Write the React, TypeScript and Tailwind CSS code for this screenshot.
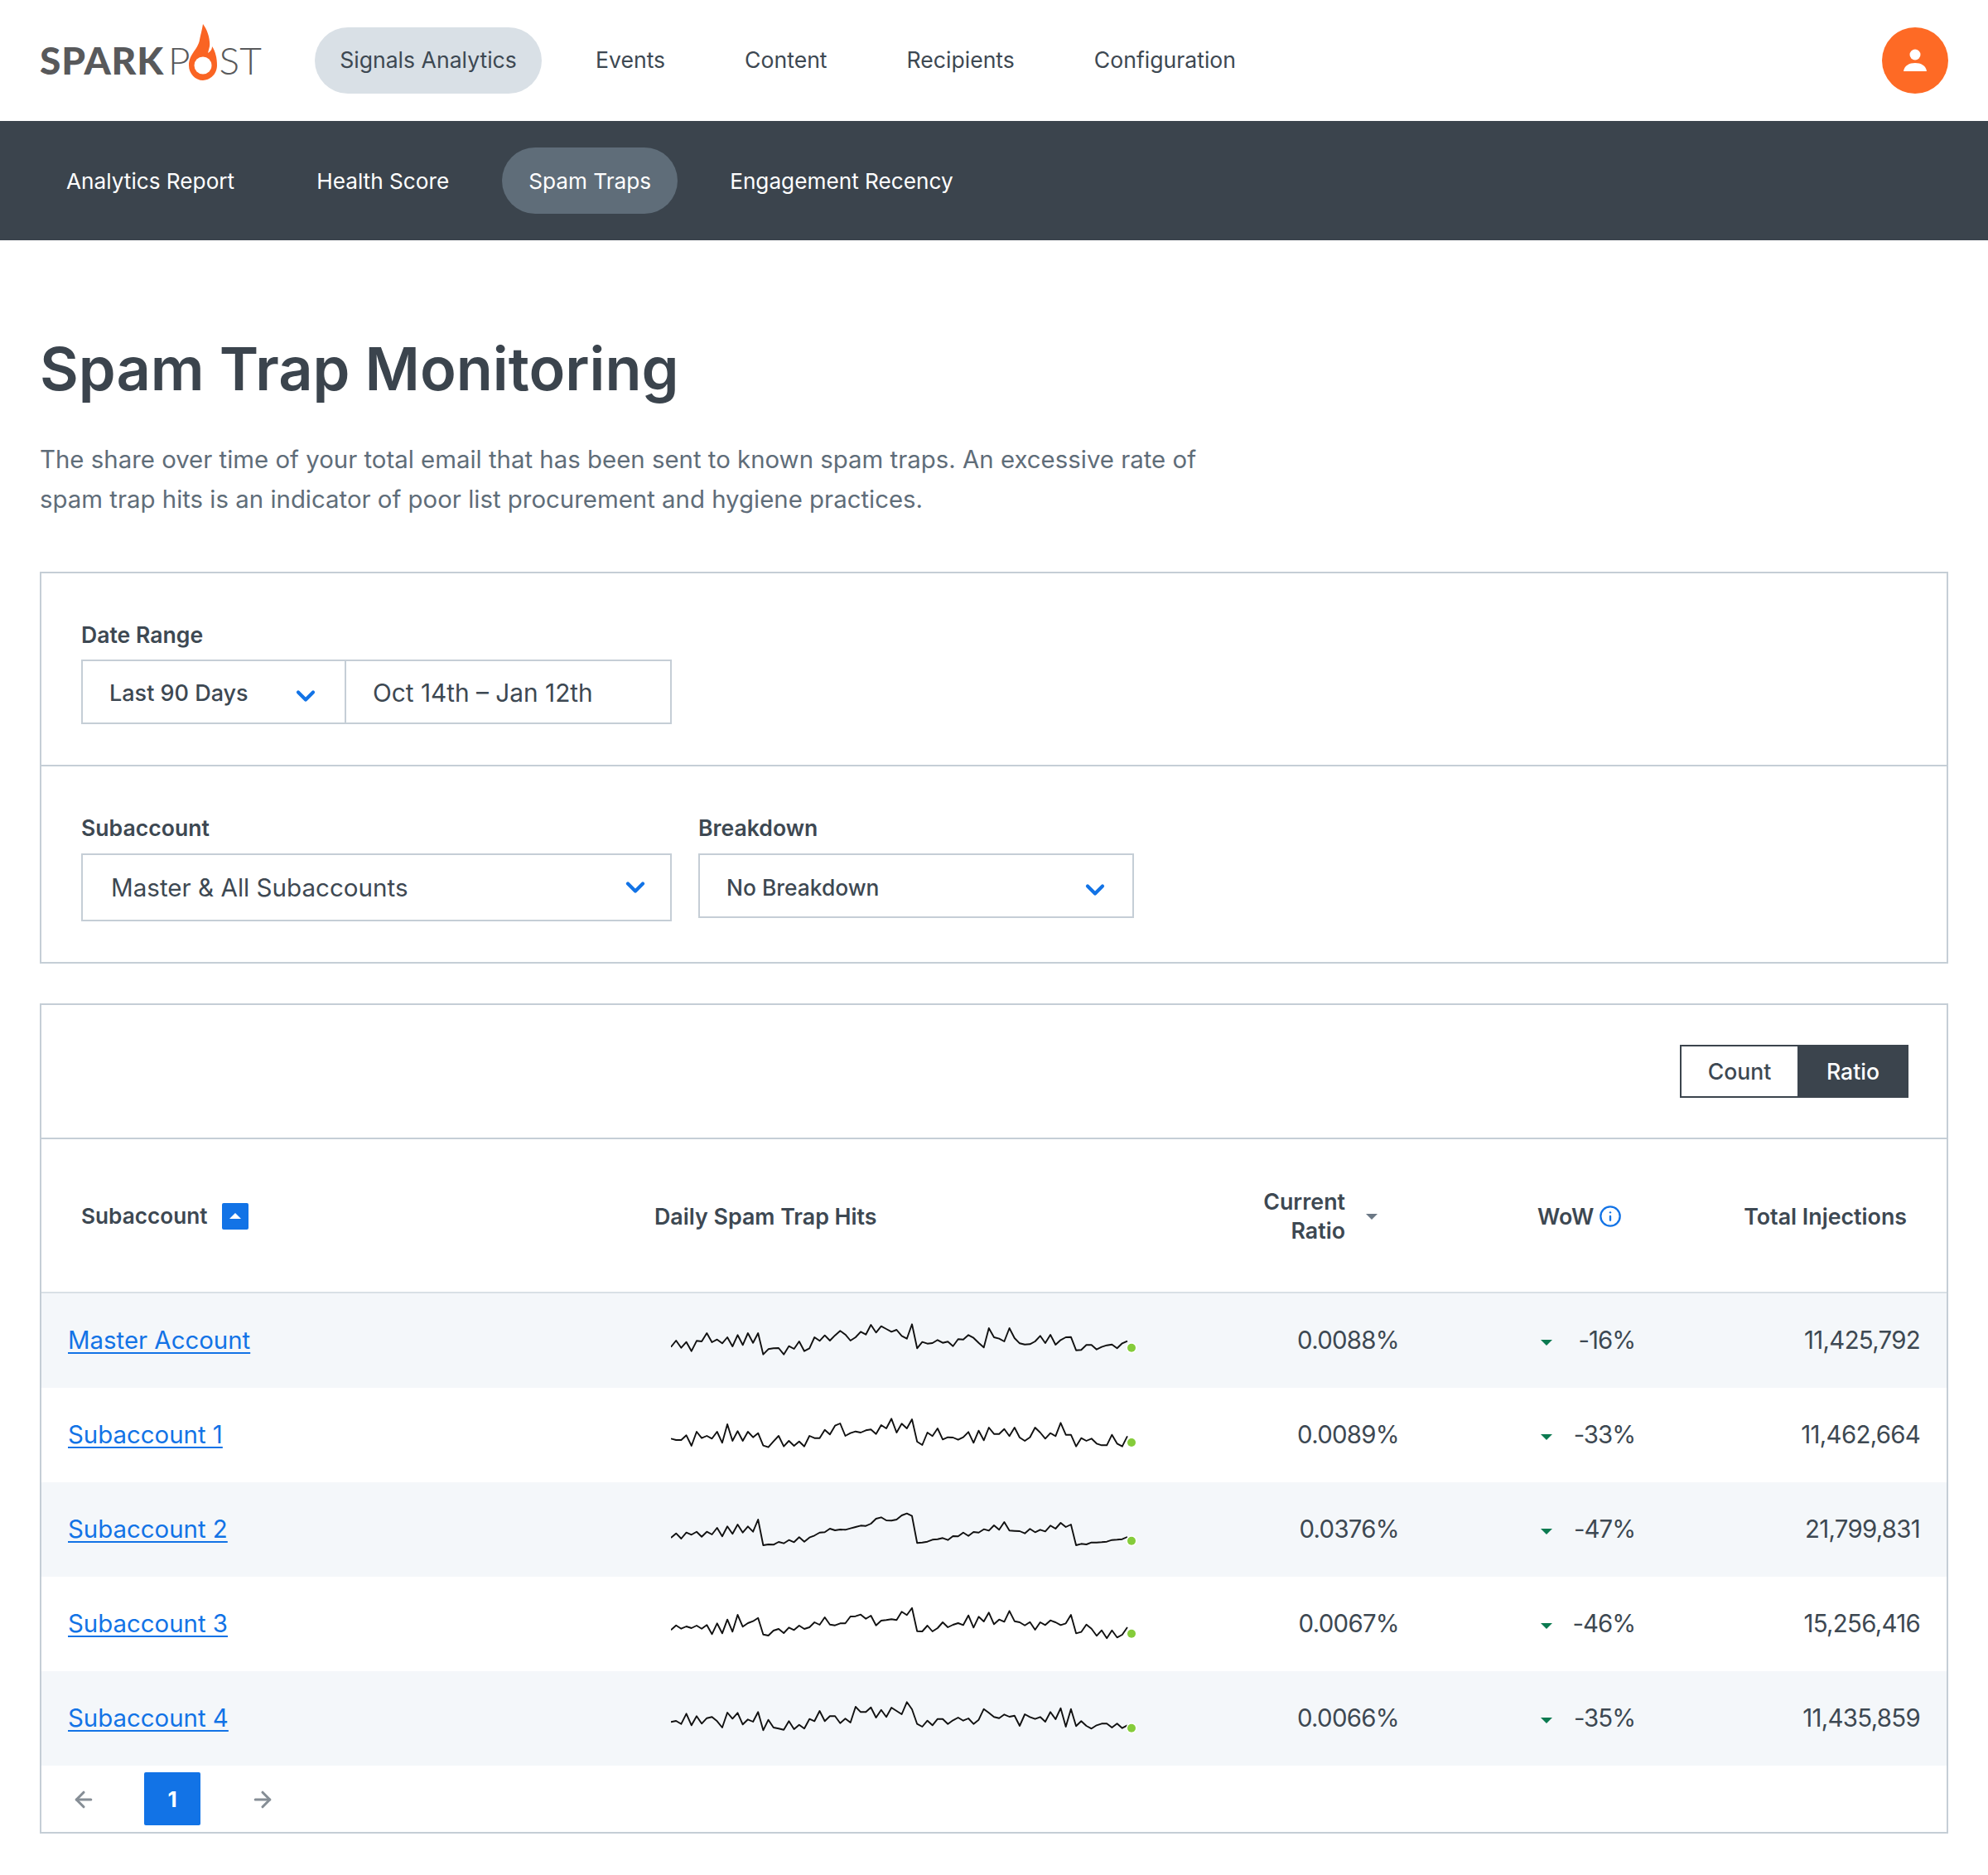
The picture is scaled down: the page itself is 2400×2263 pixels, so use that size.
import { ChevronDown, ArrowLeft, ArrowRight, Info } from "lucide-react";

const rows = [
  {
    name: "Master Account",
    ratio: "0.0088%",
    wow: "-16%",
    total: "11,425,792",
    top: 6,
    dot: 203,
    spark: [200,177,203,182,215,178,180,150,183,173,187,165,198,157,193,150,185,150,227,208,205,204,227,197,207,180,215,205,165,178,158,177,158,142,155,177,165,145,155,120,148,125,135,145,138,160,170,118,205,182,188,186,175,185,181,197,172,173,157,167,185,202,132,165,170,180,132,168,187,191,190,180,160,186,156,192,175,165,164,212,211,193,193,209,200,194,191,205,187,179],
  },
  {
    name: "Subaccount 1",
    ratio: "0.0089%",
    wow: "-33%",
    total: "11,462,664",
    top: 348,
    dot: 546,
    spark: [532,537,537,520,558,507,530,522,532,507,547,480,540,505,540,507,527,512,557,563,542,522,560,540,558,542,560,522,530,530,500,517,485,477,522,512,506,510,502,499,515,483,495,460,510,478,495,462,543,555,510,523,495,535,527,528,536,527,508,547,503,538,492,515,515,497,523,492,528,540,527,492,510,532,512,523,475,518,518,560,530,540,532,550,556,556,518,550,560,523],
  },
  {
    name: "Subaccount 2",
    ratio: "0.0376%",
    wow: "-47%",
    total: "21,799,831",
    top: 30,
    dot: 242,
    spark: [231,215,234,212,220,209,227,209,219,195,226,190,217,183,212,190,209,165,258,255,256,246,251,239,247,229,245,230,223,212,211,198,204,201,202,197,192,187,188,180,162,157,168,169,165,150,143,152,250,248,245,238,236,232,239,225,226,212,224,210,212,200,205,186,202,174,205,206,207,215,199,211,202,208,187,198,177,192,183,258,253,255,248,248,247,245,239,238,236,228],
  },
  {
    name: "Subaccount 3",
    ratio: "0.0067%",
    wow: "-46%",
    total: "15,256,416",
    top: 372,
    dot: 578,
    spark: [565,548,560,552,558,549,560,547,580,541,577,527,571,510,553,540,533,521,581,585,567,561,576,556,565,549,561,555,537,546,519,545,548,541,541,516,515,509,524,513,548,531,529,526,529,499,511,485,569,570,549,570,558,537,555,546,540,547,512,556,517,534,502,544,527,535,496,533,537,548,536,564,537,547,530,537,547,541,510,577,572,545,560,586,566,595,566,592,582,555],
  },
  {
    name: "Subaccount 4",
    ratio: "0.0066%",
    wow: "-35%",
    total: "11,435,859",
    top: 714,
    dot: 920,
    spark: [898,894,905,868,910,877,904,884,880,895,918,864,886,865,907,889,897,862,928,890,918,922,926,895,924,908,922,887,895,858,895,877,877,902,886,900,843,862,862,845,882,854,880,846,858,870,826,852,905,915,893,910,887,887,905,892,882,893,885,905,890,851,865,880,884,871,879,875,912,870,880,887,880,897,862,888,848,915,851,913,895,912,922,910,904,904,918,904,920,910],
  },
];

function Sparkline({ values, top, dot }: { values: number[]; top: number; dot: number }) {
  const step = 551 / (values.length - 1);
  const points = values.map((v, i) => `${(i * step).toFixed(1)},${((v - top) / 3).toFixed(1)}`).join(" ");
  return (
    <svg width="570" height="114" viewBox="0 0 570 114" className="block">
      <polyline points={points} fill="none" stroke="#111111" strokeWidth="1.9" strokeLinejoin="round" />
      <circle cx="556" cy={(dot - top) / 3} r="6.5" fill="#ffffff" />
      <circle cx="556" cy={(dot - top) / 3} r="5" fill="#85cc3a" />
    </svg>
  );
}

function Logo() {
  return (
    <div className="relative w-[267px] h-[70px] flex items-center text-[#58595b] text-[46px] leading-none font-['Lato',sans-serif] shrink-0">
      <span className="font-black tracking-[0.8px]">SPARK</span>
      <span className="font-light ml-[5px]">P</span>
      <span className="font-light ml-[35px]">ST</span>
      {/* flame replaces the O */}
      <svg width="38" height="70" viewBox="0 0 38 70" className="absolute left-[178px] top-[-10px]">
        <path
          d="M19 1C25 9 28 20 27 28L25 36C28 34 30 32 30 28C34 34 36 42 36 51C36 61 28 69 19 69C10 69 2 61 2 51C2 37 13 32 15 20C16 14 18 8 19 1Z"
          fill="#fa6423"
        />
        <circle cx="19" cy="51" r="10.5" fill="#ffffff" />
      </svg>
    </div>
  );
}

export default function App() {
  return (
    <div className="w-[2400px] min-h-[2263px] bg-white text-[#3d4852] font-['Inter',sans-serif]">
      {/* top nav */}
      <header className="h-[146px] flex items-center pl-[48px] pr-[48px]">
        <Logo />
        <nav className="flex items-center ml-[65px] text-[26.6px] text-[#3d4852]">
          <a className="h-[80px] w-[274px] mr-[33px] flex items-center justify-center rounded-[40px] bg-[#d9e0e6]">Signals Analytics</a>
          <a className="h-[80px] px-[32px] flex items-center">Events</a>
          <a className="h-[80px] px-[32px] ml-[32px] flex items-center">Content</a>
          <a className="h-[80px] px-[32px] ml-[32px] flex items-center">Recipients</a>
          <a className="h-[80px] px-[32px] ml-[32px] flex items-center">Configuration</a>
        </nav>
        <div className="ml-auto w-[80px] h-[80px] rounded-full bg-[#fe6a25] flex items-center justify-center">
          <svg width="32" height="32" viewBox="0 0 32 32" fill="#ffffff">
            <circle cx="16" cy="9" r="6.5" />
            <path d="M2 29C3 22 9 19 16 19C23 19 29 22 30 29Z" />
          </svg>
        </div>
      </header>

      {/* sub nav */}
      <div className="h-[144px] bg-[#3b444d] flex items-center pl-[48px] text-[26.2px] text-white">
        <a className="h-[80px] px-[32px] pt-[2px] flex items-center">Analytics Report</a>
        <a className="h-[80px] px-[32px] pt-[2px] ml-[35px] flex items-center">Health Score</a>
        <a className="h-[80px] px-[32px] pt-[2px] ml-[32px] flex items-center rounded-[40px] bg-[#5f6d79]">Spam Traps</a>
        <a className="h-[80px] px-[32px] pt-[2px] ml-[31px] flex items-center">Engagement Recency</a>
      </div>

      <main className="px-[48px]">
        <h1 className="mt-[115px] text-[72px] leading-[80px] font-semibold text-[#3b444d]">Spam Trap Monitoring</h1>
        <p className="mt-[46px] mb-[63px] w-[1450px] text-[29.4px] leading-[48px] text-[#5f6d79]">
          The share over time of your total email that has been sent to known spam traps. An excessive rate of spam trap hits is an indicator of poor list procurement and hygiene practices.
        </p>

        {/* filters */}
        <section className="border-2 border-[#c5ced6]">
          <div className="pt-[59px] pb-[49px] px-[48px] border-b-2 border-[#c5ced6]">
            <div className="text-[26.6px] leading-[30px] font-semibold mb-[15px]">Date Range</div>
            <div className="w-[713px] h-[78px] flex border-2 border-[#c5ced6]">
              <div className="w-[318px] flex items-center justify-between pl-[32px] pr-[29px] border-r-2 border-[#c5ced6] text-[27px] font-medium">
                <span className="pt-[4px]">Last 90 Days</span>
                <ChevronDown size={36} strokeWidth={2.8} className="text-[#1273e6] mt-[10px]" />
              </div>
              <div className="flex-1 flex items-center pl-[32px] pt-[2px] text-[29.8px]">Oct 14th – Jan 12th</div>
            </div>
          </div>
          <div className="pt-[59px] pb-[49px] px-[48px] flex gap-[32px] items-start">
            <div>
              <div className="text-[26.6px] leading-[30px] font-semibold mb-[16px]">Subaccount</div>
              <div className="w-[713px] h-[82px] flex items-center justify-between pl-[34px] pr-[24px] border-2 border-[#c5ced6] text-[29.6px]">
                <span>Master &amp; All Subaccounts</span>
                <ChevronDown size={36} strokeWidth={2.8} className="text-[#1273e6]" />
              </div>
            </div>
            <div>
              <div className="text-[26.6px] leading-[30px] font-semibold mb-[16px]">Breakdown</div>
              <div className="w-[526px] h-[78px] flex items-center justify-between pl-[32px] pr-[27px] border-2 border-[#c5ced6] text-[26.4px] font-medium">
                <span className="pt-[5px]">No Breakdown</span>
                <ChevronDown size={36} strokeWidth={2.8} className="text-[#1273e6] mt-[10px]" />
              </div>
            </div>
          </div>
        </section>

        {/* table card */}
        <section className="mt-[48px] border-2 border-[#c5ced6]">
          <div className="pt-[48px] pb-[48px] pr-[46px] flex justify-end border-b-2 border-[#c5ced6]">
            <div className="h-[64px] flex text-[26.6px] font-medium">
              <button className="w-[142px] pt-[2px] flex items-center justify-center border-2 border-[#3b444d] border-r-0">Count</button>
              <button className="w-[134px] pt-[2px] flex items-center justify-center bg-[#3b444d] text-white">Ratio</button>
            </div>
          </div>

          {/* table head */}
          <div className="h-[186px] pt-[2px] flex items-center border-b-2 border-[#d9e0e6] text-[26.8px] font-semibold">
            <div className="w-[740px] pl-[48px] flex items-center">
              <span className="text-[26.2px]">Subaccount</span>
              <span className="ml-[18px] w-[32px] h-[32px] rounded-[2px] bg-[#1273e6] flex items-center justify-center">
                <span className="w-0 h-0 border-x-[7px] border-x-transparent border-b-[7px] border-b-white" />
              </span>
            </div>
            <div className="w-[734px]">Daily Spam Trap Hits</div>
            <div className="w-[100px] flex flex-col items-end leading-[35px] whitespace-nowrap">
              <span>Current</span>
              <span>Ratio</span>
            </div>
            <span className="ml-[25px] w-0 h-0 border-x-[7px] border-x-transparent border-t-[7px] border-t-[#6b7885]" />
            <span className="ml-[193px]">WoW</span>
            <Info size={28} strokeWidth={2} className="ml-[6px] text-[#1273e6]" />
            <span className="ml-auto pr-[48px]">Total Injections</span>
          </div>

          {/* table rows */}
          {rows.map((row, i) => (
            <div key={row.name} className={i % 2 === 0 ? "h-[114px] flex items-center bg-[#f4f7fa] text-[29.4px]" : "h-[114px] flex items-center bg-white text-[29.4px]"}>
              <div className="w-[760px] pl-[32px]">
                <a className="text-[#1273e6] underline underline-offset-4">{row.name}</a>
              </div>
              <div className="w-[590px] h-full">
                <Sparkline values={row.spark} top={row.top} dot={row.dot} />
              </div>
              <div className="w-[289px] text-right tracking-[-0.7px]">{row.ratio}</div>
              <div className="w-[285px] flex items-center pl-[171px]">
                <span className="w-0 h-0 border-x-[7px] border-x-transparent border-t-[7px] border-t-[#0b7a50] mt-[5px]" />
                <span className="flex-1 text-right tracking-[-1px]">{row.wow}</span>
              </div>
              <div className="flex-1 text-right pr-[32px] tracking-[-0.7px]">{row.total}</div>
            </div>
          ))}

          {/* pagination */}
          <div className="h-[80px] flex items-center text-[#868e96]">
            <ArrowLeft size={30} strokeWidth={2.5} className="ml-[36px] mt-[2px]" />
            <span className="ml-[58px] w-[68px] h-[64px] rounded-[2px] bg-[#1273e6] text-white text-[26px] font-bold flex items-center justify-center">1</span>
            <ArrowRight size={30} strokeWidth={2.5} className="ml-[60px] mt-[2px]" />
          </div>
        </section>
      </main>
    </div>
  );
}
